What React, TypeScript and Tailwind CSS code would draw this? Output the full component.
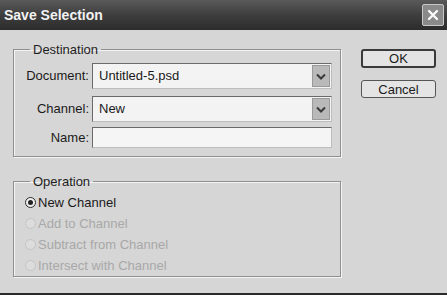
import React from "react";

function Chevron() {
  return (
    <svg width="10" height="7" viewBox="0 0 10 7">
      <path d="M1 1.5 L5 5.5 L9 1.5" fill="none" stroke="#3a3a3a" strokeWidth="2" />
    </svg>
  );
}

function Select({ value }: { value: string }) {
  return (
    <div className="flex h-[26px] w-[240px] items-stretch border border-t-[#6a6a6a] border-l-[#6a6a6a] border-r-[#bdbdbd] border-b-[#bdbdbd] bg-[#f3f3f3]">
      <div className="flex flex-1 items-center pl-[6px] text-[13px] text-[#1a1a1a]">{value}</div>
      <div className="m-[1px] flex w-[18px] items-center justify-center border border-[#9a9a9a] bg-[#b9b9b9]">
        <Chevron />
      </div>
    </div>
  );
}

function Radio({ label, checked, disabled }: { label: string; checked?: boolean; disabled?: boolean }) {
  return (
    <div className="flex h-[21px] items-center gap-[2px] pl-[11px]">
      <div
        className={
          checked
            ? "flex h-[11px] w-[11px] items-center justify-center rounded-full border border-[#2a2a2a] bg-[#f0f0f0]"
            : "flex h-[11px] w-[11px] items-center justify-center rounded-full border border-[#c4c4c4] bg-[#dcdcdc]"
        }
      >
        {checked && <div className="h-[5px] w-[5px] rounded-full bg-[#222]" />}
      </div>
      <span className={disabled ? "text-[13px] text-[#a8a8a8]" : "text-[13px] text-[#1a1a1a]"}>{label}</span>
    </div>
  );
}

export default function App() {
  return (
    <div
      className="flex h-[295px] w-[447px] flex-col overflow-hidden bg-[#d6d6d6]"
      style={{ fontFamily: '"Liberation Sans", Arial, sans-serif' }}
    >
      <div className="flex h-[30px] items-center justify-between bg-gradient-to-b from-[#5a5a5a] via-[#3e3e3e] to-[#2c2c2c] pl-[4px] pr-[3px]">
        <span className="text-[14px] font-bold text-[#f2f2f2]">Save Selection</span>
        <div className="flex h-[22px] w-[22px] items-center justify-center rounded-[2px] border border-[#c8c8c8] bg-[#8a8a8a]">
          <svg width="12" height="12" viewBox="0 0 12 12">
            <path d="M2 2 L10 10 M10 2 L2 10" stroke="#fafafa" strokeWidth="2.4" strokeLinecap="round" />
          </svg>
        </div>
      </div>
      <div className="flex flex-1 border-b-2 border-[#2a2a2a] pl-[13px]">
        <div className="flex w-[328px] flex-col">
          <fieldset className="mt-[12px] border border-[#8f8f8f] pb-[8px] shadow-[inset_1px_1px_0_#f4f4f4,1px_1px_0_#f4f4f4]">
            <legend className="ml-[16px] px-[3px] text-[13px] leading-[15px] text-[#1e1e1e]">Destination</legend>
            <div className="flex flex-col pt-[6px]">
              <div className="flex items-center">
                <div className="w-[78px] pr-[3px] text-right text-[13px] text-[#1a1a1a]">Document:</div>
                <Select value="Untitled-5.psd" />
              </div>
              <div className="mt-[7px] flex items-center">
                <div className="w-[78px] pr-[3px] text-right text-[13px] text-[#1a1a1a]">Channel:</div>
                <Select value="New" />
              </div>
              <div className="mt-[5px] flex items-center">
                <div className="w-[78px] pr-[3px] text-right text-[13px] text-[#1a1a1a]">Name:</div>
                <div className="h-[21px] w-[240px] border border-t-[#6a6a6a] border-l-[#6a6a6a] border-r-[#bdbdbd] border-b-[#bdbdbd] bg-[#f5f5f5]" />
              </div>
            </div>
          </fieldset>
          <fieldset className="mt-[17px] border border-[#8f8f8f] shadow-[inset_1px_1px_0_#f4f4f4,1px_1px_0_#f4f4f4]">
            <legend className="ml-[16px] px-[3px] text-[13px] leading-[15px] text-[#1e1e1e]">Operation</legend>
            <div className="flex flex-col pt-[3px]">
              <Radio label="New Channel" checked />
              <Radio label="Add to Channel" disabled />
              <Radio label="Subtract from Channel" disabled />
              <Radio label="Intersect with Channel" disabled />
            </div>
          </fieldset>
        </div>
        <div className="ml-[20px] flex flex-col gap-[12px] pt-[19px]">
          <button className="h-[19px] w-[75px] rounded-[3px] border-2 border-[#3a3a3a] bg-[#e4e4e4] text-[13px] leading-[15px] text-[#1a1a1a]">
            OK
          </button>
          <button className="h-[18px] w-[75px] rounded-[3px] border border-[#555] bg-[#e4e4e4] text-[13px] leading-[15px] text-[#1a1a1a]">
            Cancel
          </button>
        </div>
      </div>
    </div>
  );
}
